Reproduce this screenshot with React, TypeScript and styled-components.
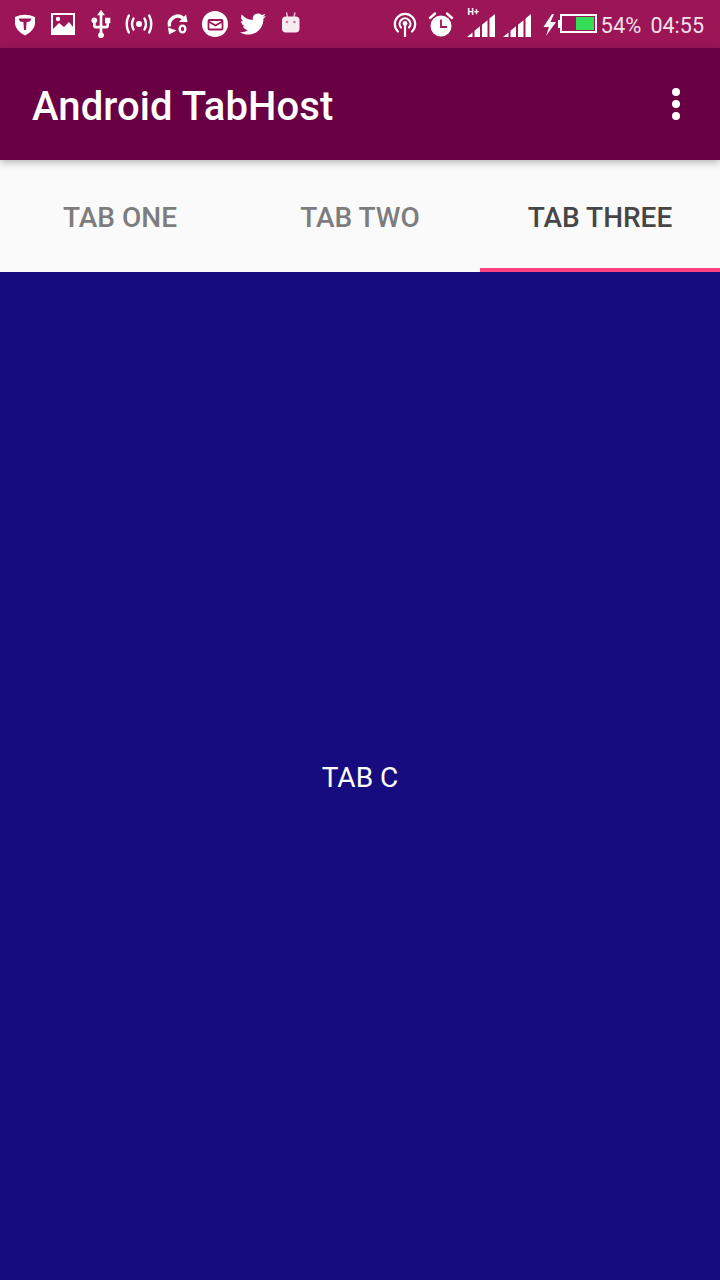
import React from "react";
import styled, { createGlobalStyle } from "styled-components";
import { FaTwitter } from "react-icons/fa";

const Global = createGlobalStyle`
  html, body { margin: 0; padding: 0; background: #170b80; }
  body { font-family: Roboto, "Liberation Sans", sans-serif; }
`;

const Screen = styled.div`
  width: 720px;
  height: 1280px;
  display: flex;
  flex-direction: column;
  overflow: hidden;
  background: #170b80;
`;

const StatusBar = styled.div`
  height: 48px;
  flex: none;
  display: flex;
  align-items: center;
  justify-content: space-between;
  padding: 0 16px 0 11px;
  background: #9c1557;
  color: #fff;
`;

const LeftIcons = styled.div`
  display: flex;
  align-items: center;
  gap: 10px;
`;

const RightIcons = styled.div`
  display: flex;
  align-items: center;
  gap: 8px;
`;

const IconBox = styled.svg`
  width: 28px;
  height: 28px;
  flex: none;
  display: block;
  fill: #fff;
`;

const TwitterSlot = styled.span`
  width: 28px;
  height: 28px;
  flex: none;
  display: flex;
  align-items: center;
  justify-content: center;
  color: #fff;
  font-size: 26px;
`;

const SignalGroup = styled.div`
  display: flex;
  align-items: center;
  gap: 8px;
  margin-left: 4px;
`;

const SignalSlot = styled.div`
  position: relative;
  width: 28px;
  height: 28px;
`;

const NetworkTag = styled.span`
  position: absolute;
  left: 1px;
  top: -3px;
  font-size: 9px;
  line-height: 10px;
  font-weight: 700;
  color: #fff;
`;

const BatteryGroup = styled.div`
  display: flex;
  align-items: center;
  gap: 1px;
`;

const BoltIcon = styled.svg`
  width: 18px;
  height: 28px;
  flex: none;
  display: block;
  fill: #fff;
`;

const Battery = styled.div`
  display: flex;
  align-items: center;
  width: 39px;
  height: 19px;
  margin-top: -1px;
  margin-right: 2px;
`;

const BatteryNub = styled.div`
  width: 2px;
  height: 8px;
  background: #fff;
  flex: none;
`;

const BatteryBody = styled.div`
  flex: 1;
  height: 100%;
  box-sizing: border-box;
  border: 2px solid #fff;
  padding: 1px;
  display: flex;
  justify-content: flex-end;
`;

const BatteryFill = styled.div`
  width: 18px;
  background: #33dd55;
`;

const StatusText = styled.span`
  font-size: 22px;
  line-height: 28px;
  padding-top: 3px;
  color: rgba(255, 255, 255, 0.9);
  margin-left: 1px;
`;

const Clock = styled(StatusText)`
  font-size: 21.5px;
`;

const AppBar = styled.header`
  position: relative;
  z-index: 2;
  height: 112px;
  flex: none;
  display: flex;
  align-items: center;
  justify-content: space-between;
  padding: 0 40px 0 32px;
  background: #6a0044;
  box-shadow: 0 2px 8px rgba(0, 0, 0, 0.3);
`;

const Title = styled.h1`
  margin: 6px 0 0;
  font-size: 40px;
  line-height: 48px;
  font-weight: 500;
  letter-spacing: 0.1px;
  color: #fff;
`;

const Overflow = styled.div`
  display: flex;
  flex-direction: column;
  gap: 4px;
`;

const Dot = styled.span`
  width: 8px;
  height: 8px;
  border-radius: 50%;
  background: #fff;
`;

const Tabs = styled.nav`
  height: 112px;
  flex: none;
  display: grid;
  grid-template-columns: repeat(3, 1fr);
  background: #fafafa;
`;

const Tab = styled.div<{ $active?: boolean }>`
  display: flex;
  align-items: center;
  justify-content: center;
  box-sizing: border-box;
  padding-top: 7px;
  border-bottom: 4px solid ${(p) => (p.$active ? "#ff4081" : "transparent")};
  font-size: 28px;
  font-weight: 500;
  color: ${(p) => (p.$active ? "#464646" : "#7d7d7d")};
`;

const Content = styled.main`
  flex: 1;
  display: flex;
  align-items: center;
  justify-content: center;
  padding-top: 2px;
  background: #170b80;
  color: #fff;
  font-size: 28px;
`;

const BG = "#9c1557";

const Signal = () => (
  <IconBox viewBox="0 0 28 28">
    <polygon points="0,27 5.5,22.5 5.5,27" />
    <polygon points="7.5,27 7.5,20.8 13,16.3 13,27" />
    <polygon points="15,27 15,14.7 20.5,10.2 20.5,27" />
    <polygon points="22.5,27 22.5,8.5 28,4 28,27" />
  </IconBox>
);

export default function App() {
  return (
    <Screen>
      <Global />
      <StatusBar>
        <LeftIcons>
          <IconBox viewBox="0 0 28 28">
            <path
              fillRule="evenodd"
              d="M4 7 Q14 2.5 24 7 L24 14 Q23 21 14 25.5 Q5 21 4 14 Z M7.5 8.5 L20.5 8.5 L19 11.5 L15.6 12 L15 20 L13 20 L12.4 12 L9 11.5 Z"
            />
          </IconBox>
          <IconBox viewBox="0 0 28 28">
            <path
              fillRule="evenodd"
              d="M2 3 H26 V25 H2 Z M4 5 V19 L10 13 L15 17 L20 12 L24 17 V5 Z"
            />
            <circle cx="9" cy="9" r="2.2" />
          </IconBox>
          <IconBox viewBox="1.5 1.1 21 21">
            <path d="M15 7v4h1v2h-3V5h2l-3-4-3 4h2v8H8v-2.07c.7-.37 1.2-1.08 1.2-1.93 0-1.21-.99-2.2-2.2-2.2-1.21 0-2.2.99-2.2 2.2 0 .85.5 1.56 1.2 1.93V13c0 1.11.89 2 2 2h3v3.05c-.71.37-1.2 1.1-1.2 1.95 0 1.22.99 2.2 2.2 2.2 1.21 0 2.2-.98 2.2-2.2 0-.85-.49-1.58-1.2-1.95V15h3c1.11 0 2-.89 2-2v-2h1V7h-4z" />
          </IconBox>
          <IconBox viewBox="0 0 28 28">
            <circle cx="14" cy="14" r="3" />
            <g fill="none" stroke="#fff" strokeWidth="2.4" strokeLinecap="round">
              <path d="M8.5 8.5 Q5.5 14 8.5 19.5" />
              <path d="M19.5 8.5 Q22.5 14 19.5 19.5" />
              <path d="M3.8 5.5 Q-.4 14 3.8 22.5" />
              <path d="M24.2 5.5 Q28.4 14 24.2 22.5" />
            </g>
          </IconBox>
          <IconBox viewBox="0 0 28 28">
            <g fill="none" stroke="#fff" strokeWidth="3.4">
              <path d="M6.5 16.5 A8.5 8.5 0 0 1 20 8" />
              <ellipse cx="19.5" cy="19" rx="2.8" ry="3.4" strokeWidth="2.4" />
            </g>
            <polygon points="16,12 24.5,12 23,4.5" />
            <polygon points="5,17.5 13.5,20.5 6,24.5" />
          </IconBox>
          <IconBox viewBox="0 0 28 28">
            <circle cx="14" cy="14" r="13" />
            <g fill="none" stroke={BG} strokeWidth="1.8">
              <rect x="7.5" y="10" width="14" height="9.5" rx="1" />
              <path d="M7.5 11.5 L14.5 15.5 L21.5 11.5" />
            </g>
          </IconBox>
          <TwitterSlot>
            <FaTwitter />
          </TwitterSlot>
          <IconBox viewBox="0 0 28 28">
            <rect x="5" y="6.5" width="17.5" height="16" rx="4" opacity="0.92" />
            <g stroke="#fff" strokeWidth="1.4" opacity="0.75">
              <line x1="9.5" y1="2.5" x2="10.5" y2="7" />
              <line x1="18" y1="2.5" x2="17" y2="7" />
            </g>
            <circle cx="10" cy="12" r="1.3" fill={BG} opacity="0.5" />
            <circle cx="17.5" cy="12" r="1.3" fill={BG} opacity="0.5" />
          </IconBox>
        </LeftIcons>
        <RightIcons>
          <IconBox viewBox="0 0 28 28">
            <g fill="none" stroke="#fff" strokeWidth="2.2" strokeLinecap="round">
              <path d="M7 21.5 A10.2 10.2 0 1 1 21 21.5" />
              <path d="M10 17.5 A5.4 5.4 0 1 1 18 17.5" />
            </g>
            <circle cx="14" cy="13.5" r="2.4" />
            <rect x="12.9" y="14" width="2.2" height="13" />
          </IconBox>
          <IconBox viewBox="0 0 28 28">
            <circle cx="14" cy="16" r="10.5" />
            <path d="M14 9.5 V17 H20" fill="none" stroke={BG} strokeWidth="1.8" />
            <g stroke="#fff" strokeWidth="2.4" strokeLinecap="round">
              <line x1="3" y1="8" x2="8" y2="3.5" />
              <line x1="25" y1="8" x2="20" y2="3.5" />
            </g>
          </IconBox>
          <SignalGroup>
            <SignalSlot>
              <Signal />
              <NetworkTag>H+</NetworkTag>
            </SignalSlot>
            <SignalSlot>
              <Signal />
            </SignalSlot>
          </SignalGroup>
          <BatteryGroup>
            <BoltIcon viewBox="0 0 18 28">
              <polygon points="13,4 4.5,17 10,17 7,26 17,12 11.5,12 15,4" />
            </BoltIcon>
            <Battery>
              <BatteryNub />
              <BatteryBody>
                <BatteryFill />
              </BatteryBody>
            </Battery>
            <StatusText>54%</StatusText>
          </BatteryGroup>
          <Clock>04:55</Clock>
        </RightIcons>
      </StatusBar>
      <AppBar>
        <Title>Android TabHost</Title>
        <Overflow>
          <Dot />
          <Dot />
          <Dot />
        </Overflow>
      </AppBar>
      <Tabs>
        <Tab>TAB ONE</Tab>
        <Tab>TAB TWO</Tab>
        <Tab $active>TAB THREE</Tab>
      </Tabs>
      <Content>TAB C</Content>
    </Screen>
  );
}
